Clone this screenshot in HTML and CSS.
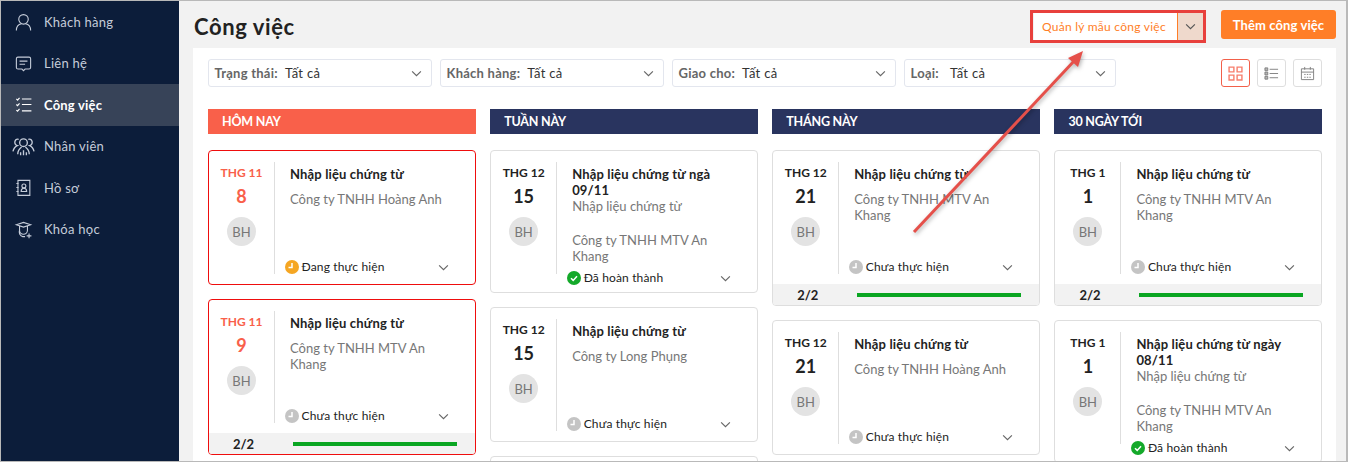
FILE: index.html
```html
<!DOCTYPE html>
<html lang="vi">
<head>
<meta charset="utf-8">
<title>Công việc</title>
<link rel="stylesheet" href="styles.css">
</head>
<body>
<div class="app">
  <nav class="sidebar">
    <a class="nav-item"><svg class="nav-icon" viewBox="0 0 24 24"><circle cx="12" cy="8" r="6"/><path d="M3 22c0-5 3-8 6.500-8.500M21 22c0-5-3-8-6.500-8.500"/></svg>Khách hàng</a>
    <a class="nav-item"><svg class="nav-icon" viewBox="0 0 24 24"><path d="M5 4h14a2 2 0 0 1 2 2v11a2 2 0 0 1-2 2h-5l-2 2-2-2H5a2 2 0 0 1-2-2V6a2 2 0 0 1 2-2z"/><path d="M7 9h10M7 13h7"/></svg>Liên hệ</a>
    <a class="nav-item nav-item--active"><svg class="nav-icon" viewBox="0 0 24 24"><path d="M10 5h12M10 12h12M10 20h12M3 5l1.500 1.500L7 3.500M3 12l1.500 1.500L7 10.500M3 19l1.500 1.500L7 17.500"/></svg>Công việc</a>
    <a class="nav-item"><svg class="nav-icon nav-icon--wide" viewBox="0 0 24 24"><circle cx="12" cy="8" r="4"/><path d="M6 20c0-3 2-6 4-7.500M18 20c0-3-2-6-4-7.500M12 16v5M9 18v3M15 18v3"/><path d="M7 4.500A3 3 0 0 0 5.500 11C3 12 1.500 15 1 17M17 4.500A3 3 0 0 1 18.500 11C21 12 22.500 15 23 17"/></svg>Nhân viên</a>
    <a class="nav-item"><svg class="nav-icon" viewBox="0 0 24 24"><path d="M5 3h15v19H5zM3 7h3M3 12h3M3 17h3"/><circle cx="12.500" cy="10" r="2.500"/><path d="M9 17c0-3 1.500-4 3.500-4s3.500 1 3.500 4z"/></svg>Hồ sơ</a>
    <a class="nav-item"><svg class="nav-icon" viewBox="0 0 24 24"><path d="M3 6l9-3 9 3-9 3zM7 8v5a5 5 0 0 0 10 0V8M7 13c-1 3 0 7 4 8h3M19 17v6M16 20h6"/></svg>Khóa học</a>
  </nav>

  <main class="content">
    <header class="topbar">
      <h1 class="page-title">Công việc</h1>
      <div class="template-btn">
        <span class="template-btn__label">Quản lý mẫu công việc</span>
        <span class="template-btn__caret"><svg class="chev chev--dark" viewBox="0 0 12 8"><path d="M1 1.500l5 5 5-5"/></svg></span>
      </div>
      <button class="add-btn">Thêm công việc</button>
    </header>

    <section class="panel">
      <div class="filters">
        <div class="filter"><span class="filter__label">Trạng thái:</span><span class="filter__value">Tất cả</span><svg class="chev" viewBox="0 0 12 8"><path d="M1 1.500l5 5 5-5"/></svg></div>
        <div class="filter"><span class="filter__label">Khách hàng:</span><span class="filter__value">Tất cả</span><svg class="chev" viewBox="0 0 12 8"><path d="M1 1.500l5 5 5-5"/></svg></div>
        <div class="filter"><span class="filter__label">Giao cho:</span><span class="filter__value">Tất cả</span><svg class="chev" viewBox="0 0 12 8"><path d="M1 1.500l5 5 5-5"/></svg></div>
        <div class="filter filter--last"><span class="filter__label">Loại:</span><span class="filter__value">Tất cả</span><svg class="chev" viewBox="0 0 12 8"><path d="M1 1.500l5 5 5-5"/></svg></div>
        <div class="views">
          <span class="view view--active"><svg viewBox="0 0 14 14"><path d="M1 1h4.500v4.500H1zM8.500 1H13v4.500H8.500zM1 8.500h4.500V13H1zM8.500 8.500H13V13H8.500z"/></svg></span>
          <span class="view"><svg viewBox="0 0 16 14"><path class="view__fill" d="M1 1h3v3H1zM1 5.500h3v3H1zM1 10h3v3H1z"/><path d="M6 2.500h9M6 7h9M6 11.500h9"/></svg></span>
          <span class="view"><svg viewBox="0 0 16 16"><path d="M1.500 3h13v11.500h-13zM1.500 6.500h13M5 1v3M11 1v3M4.500 9h1.500M7.300 9h1.500M10 9h1.500M4.500 12h1.500M7.300 12h1.500M10 12h1.500"/></svg></span>
        </div>
      </div>

      <div class="board">
        <div class="column">
          <h2 class="column__head column__head--today">HÔM NAY</h2>
          <article class="card card--urgent">
            <div class="card__body">
              <div class="card__date"><span class="month">THG 11</span><span class="day">8</span><span class="avatar">BH</span></div>
              <div class="card__main">
                <div class="title">Nhập liệu chứng từ</div>
                <div class="company">Công ty TNHH Hoàng Anh</div>
                <div class="status"><svg class="status__icon status__icon--doing" viewBox="0 0 14 14"><circle cx="7" cy="7" r="7"/><path d="M7 3v4.500H3.500"/></svg><span>Đang thực hiện</span><svg class="chev chev--small" viewBox="0 0 12 8"><path d="M1 1.500l5 5 5-5"/></svg></div>
              </div>
            </div>
          </article>
          <article class="card card--urgent">
            <div class="card__body">
              <div class="card__date"><span class="month">THG 11</span><span class="day">9</span><span class="avatar">BH</span></div>
              <div class="card__main">
                <div class="title">Nhập liệu chứng từ</div>
                <div class="company">Công ty TNHH MTV An Khang</div>
                <div class="status"><svg class="status__icon status__icon--todo" viewBox="0 0 14 14"><circle cx="7" cy="7" r="7"/><path d="M7 3v4.500H3.500"/></svg><span>Chưa thực hiện</span><svg class="chev chev--small" viewBox="0 0 12 8"><path d="M1 1.500l5 5 5-5"/></svg></div>
              </div>
            </div>
            <div class="card__foot"><span class="count">2/2</span><span class="bar"></span></div>
          </article>
        </div>

        <div class="column">
          <h2 class="column__head">TUẦN NÀY</h2>
          <article class="card">
            <div class="card__body">
              <div class="card__date"><span class="month">THG 12</span><span class="day">15</span><span class="avatar">BH</span></div>
              <div class="card__main">
                <div class="title">Nhập liệu chứng từ ngà 09/11</div>
                <div class="desc">Nhập liệu chứng từ</div>
                <div class="company">Công ty TNHH MTV An Khang</div>
                <div class="status status--tall"><svg class="status__icon status__icon--done" viewBox="0 0 14 14"><circle cx="7" cy="7" r="7"/><path d="M4 7.200l2.200 2.200L10 5.200"/></svg><span>Đã hoàn thành</span><svg class="chev chev--small" viewBox="0 0 12 8"><path d="M1 1.500l5 5 5-5"/></svg></div>
              </div>
            </div>
          </article>
          <article class="card">
            <div class="card__body">
              <div class="card__date"><span class="month">THG 12</span><span class="day">15</span><span class="avatar">BH</span></div>
              <div class="card__main">
                <div class="title">Nhập liệu chứng từ</div>
                <div class="company">Công ty Long Phụng</div>
                <div class="status"><svg class="status__icon status__icon--todo" viewBox="0 0 14 14"><circle cx="7" cy="7" r="7"/><path d="M7 3v4.500H3.500"/></svg><span>Chưa thực hiện</span><svg class="chev chev--small" viewBox="0 0 12 8"><path d="M1 1.500l5 5 5-5"/></svg></div>
              </div>
            </div>
          </article>
          <article class="card card--stub"></article>
        </div>

        <div class="column">
          <h2 class="column__head">THÁNG NÀY</h2>
          <article class="card">
            <div class="card__body">
              <div class="card__date"><span class="month">THG 12</span><span class="day">21</span><span class="avatar">BH</span></div>
              <div class="card__main">
                <div class="title">Nhập liệu chứng từ</div>
                <div class="company">Công ty TNHH MTV An Khang</div>
                <div class="status"><svg class="status__icon status__icon--todo" viewBox="0 0 14 14"><circle cx="7" cy="7" r="7"/><path d="M7 3v4.500H3.500"/></svg><span>Chưa thực hiện</span><svg class="chev chev--small" viewBox="0 0 12 8"><path d="M1 1.500l5 5 5-5"/></svg></div>
              </div>
            </div>
            <div class="card__foot"><span class="count">2/2</span><span class="bar"></span></div>
          </article>
          <article class="card">
            <div class="card__body">
              <div class="card__date"><span class="month">THG 12</span><span class="day">21</span><span class="avatar">BH</span></div>
              <div class="card__main">
                <div class="title">Nhập liệu chứng từ</div>
                <div class="company">Công ty TNHH Hoàng Anh</div>
                <div class="status"><svg class="status__icon status__icon--todo" viewBox="0 0 14 14"><circle cx="7" cy="7" r="7"/><path d="M7 3v4.500H3.500"/></svg><span>Chưa thực hiện</span><svg class="chev chev--small" viewBox="0 0 12 8"><path d="M1 1.500l5 5 5-5"/></svg></div>
              </div>
            </div>
          </article>
        </div>

        <div class="column">
          <h2 class="column__head">30 NGÀY TỚI</h2>
          <article class="card">
            <div class="card__body">
              <div class="card__date"><span class="month">THG 1</span><span class="day">1</span><span class="avatar">BH</span></div>
              <div class="card__main">
                <div class="title">Nhập liệu chứng từ</div>
                <div class="company">Công ty TNHH MTV An Khang</div>
                <div class="status"><svg class="status__icon status__icon--todo" viewBox="0 0 14 14"><circle cx="7" cy="7" r="7"/><path d="M7 3v4.500H3.500"/></svg><span>Chưa thực hiện</span><svg class="chev chev--small" viewBox="0 0 12 8"><path d="M1 1.500l5 5 5-5"/></svg></div>
              </div>
            </div>
            <div class="card__foot"><span class="count">2/2</span><span class="bar"></span></div>
          </article>
          <article class="card">
            <div class="card__body">
              <div class="card__date"><span class="month">THG 1</span><span class="day">1</span><span class="avatar">BH</span></div>
              <div class="card__main">
                <div class="title">Nhập liệu chứng từ ngày 08/11</div>
                <div class="desc">Nhập liệu chứng từ</div>
                <div class="company">Công ty TNHH MTV An Khang</div>
                <div class="status status--tall"><svg class="status__icon status__icon--done" viewBox="0 0 14 14"><circle cx="7" cy="7" r="7"/><path d="M4 7.200l2.200 2.200L10 5.200"/></svg><span>Đã hoàn thành</span><svg class="chev chev--small" viewBox="0 0 12 8"><path d="M1 1.500l5 5 5-5"/></svg></div>
              </div>
            </div>
          </article>
        </div>
      </div>
    </section>
  </main>

  <div class="callout-box"></div>
  <svg class="callout-arrow" viewBox="0 0 1348 462">
    <path class="callout-arrow__line" d="M914 232L1075 60"/>
    <path class="callout-arrow__head" d="M1083 51L1078 67L1068 58z"/>
  </svg>
</div>
</body>
</html>
```

FILE: styles.css
```css
* { box-sizing: border-box; }
html, body { margin: 0; height: 100%; }
body { font-family: "Lato", "Noto Sans", sans-serif; color: #222; background: #f2f2f2; overflow: hidden; }

.app {
  position: relative;
  display: flex;
  height: 462px;
  border: 1px solid #b9b9b9;
  border-right-width: 2px;
  overflow: hidden;
}

.sidebar { flex: 0 0 178px; background: #0c1d3a; display: flex; flex-direction: column; padding-top: .4px; }
.nav-item {
  height: 41.400px;
  display: flex;
  align-items: center;
  gap: 11px;
  padding-left: 13px;
  font-size: 13px;
  letter-spacing: .25px;
  color: #c5ccd9;
}
.nav-item--active { background: #374358; color: #fff; font-weight: 700; letter-spacing: .2px; }
.nav-icon { width: 19px; height: 19px; fill: none; stroke: #c5ccd9; stroke-width: 1.400; flex: none; }
.nav-item--active .nav-icon { stroke: #fff; }
.nav-icon--wide { width: 23px; height: 23px; margin: 0 -2px; }

.content { flex: 1; display: flex; flex-direction: column; min-width: 0; padding-left: 14px; padding-right: 10px; }
.topbar { height: 47px; display: flex; align-items: center; flex: none; }
.page-title { margin: 3px auto 0 1px; font-size: 22px; font-weight: 700; letter-spacing: .6px; color: #222; }

.template-btn { width: 169px; height: 27px; display: flex; background: #fff; margin-top: 4px; margin-right: 18px; }
.template-btn__label { flex: 1; font-size: 12px; letter-spacing: .25px; color: #ff7e27; line-height: 27px; padding-left: 8px; border-right: 1px solid #ff7e27; }
.template-btn__caret { width: 25px; background: #efd9cc; display: flex; align-items: center; justify-content: center; }

.add-btn {
  width: 115px; height: 29px; border: 0; border-radius: 3px;
  background: #ff7e27; color: #fff; font: 700 13px "Lato", sans-serif; letter-spacing: .1px; padding: 0;
}

.panel { flex: 1; background: #fff; min-height: 0; padding: 11px 14px 0 15px; }

.filters { display: flex; height: 28px; gap: 8px; }
.filter {
  width: 224px; display: flex; align-items: center;
  border: 1px solid #e3e6ee; border-radius: 3px;
  padding: 0 9px 0 5.500px; font-size: 13px;
}
.filter--last { width: 212px; }
.filter__label { color: #666; font-weight: 700; letter-spacing: .25px; margin-right: 7px; }
.filter--last .filter__label { margin-right: 11px; }
.filter__value { color: #333; letter-spacing: .3px; margin-right: auto; }
.chev { width: 11px; height: 7px; fill: none; stroke: #666; stroke-width: 1.300; flex: none; }
.chev--dark { stroke: #555; }
.chev--small { margin-left: auto; margin-right: 2px; }

.views { margin-left: auto; display: flex; gap: 7px; }
.view { width: 29px; height: 28px; border: 1px solid #dedede; border-radius: 3px; display: flex; align-items: center; justify-content: center; }
.view svg { width: 15px; height: 15px; fill: none; stroke: #808080; stroke-width: 1; }
.view .view__fill { fill: #b5b5b5; }
.view--active { border-color: #f2604a; }
.view--active svg { stroke: #f77e6c; stroke-width: 1.300; }

.board { display: flex; gap: 14.500px; margin-top: 22px; }
.column { flex: 1 1 0; min-width: 0; display: flex; flex-direction: column; gap: 14px; }
.column__head {
  margin: 0 0 2px; height: 25px; line-height: 25px; padding-left: 14px;
  background: #29345f; color: #fff; font-size: 12.500px; letter-spacing: -.2px; font-weight: 700;
}
.column__head--today { background: #f9604a; }

.card { border: 1px solid #dedede; border-radius: 4px; background: #fff; flex: none; overflow: hidden; }
.card--urgent { border-color: #ef0d0d; }
.card--stub { height: 40px; }
.card__body { display: flex; padding: 11px 0 10px; }
.card__date {
  flex: 0 0 66px; height: 112px;
  display: flex; flex-direction: column; align-items: center;
  border-right: 1px solid #dedede; padding-top: 3px;
}
.month { font-size: 12px; font-weight: 700; line-height: 16px; color: #222; }
.day { font-size: 18px; font-weight: 700; line-height: 22px; margin-top: 4px; color: #222; }
.avatar {
  width: 29px; height: 29px; border-radius: 50%; margin-top: 10px;
  background: #e3e3e3; color: #777; font-size: 13px;
  display: flex; align-items: center; justify-content: center;
}
.card--urgent .month, .card--urgent .day { color: #f9604a; }
.card__main { flex: 1; min-width: 0; min-height: 112px; padding: 4px 24px 0 15px; display: flex; flex-direction: column; }
.title { font-size: 13px; font-weight: 700; letter-spacing: .15px; line-height: 16px; color: #222; }
.desc { font-size: 13px; line-height: 16px; color: #777; margin-bottom: 9px; }
.company { font-size: 13px; line-height: 16px; color: #777; margin-top: 9px; }
.status { margin-top: auto; margin-bottom: -1px; margin-left: -5.500px; height: 16px; display: flex; align-items: center; font-size: 12px; letter-spacing: .15px; line-height: 16px; color: #222; }
.status--tall { margin-top: 6px; margin-bottom: -4px; }
.status__icon { width: 14px; height: 14px; margin-right: 3px; flex: none; fill: #c4c4c4; stroke: #fff; stroke-width: 1.500; }
.status__icon circle { stroke: none; }
.status__icon path { fill: none; }
.status__icon--doing { fill: #f5a623; }
.status__icon--done { fill: #14a92a; }

.card__foot { height: 21px; background: #f2f2f2; display: flex; align-items: center; padding: 0 18px 0 24px; }
.count { font-size: 13px; font-weight: 700; color: #222; width: 60px; }
.bar { flex: 1; height: 4px; background: #0aa622; }

.callout-box { position: absolute; left: 1029px; top: 9px; width: 176px; height: 33px; border: 3px solid #e8403c; pointer-events: none; }
.callout-arrow { position: absolute; left: -1px; top: -1px; width: 1348px; height: 462px; pointer-events: none; filter: drop-shadow(1px 2px 2px rgba(0,0,0,.3)); }
.callout-arrow__line { stroke: #e5504a; stroke-width: 3; fill: none; }
.callout-arrow__head { fill: #e5504a; }
```
